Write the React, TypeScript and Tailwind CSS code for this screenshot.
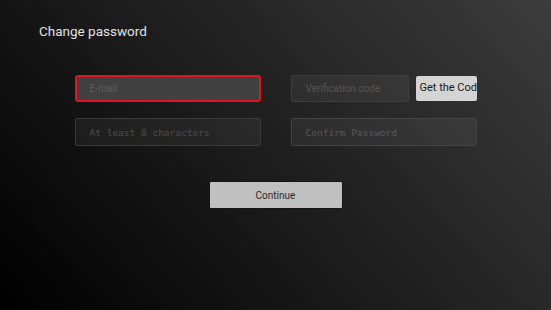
export default function App() {
  return (
    <div
      className="w-[551px] h-[310px] overflow-hidden bg-[linear-gradient(48deg,#000_0%,#1e1e1e_50%,#3c3c3c_100%)] flex flex-col"
      style={{ fontFamily: "Roboto, 'Liberation Sans', sans-serif" }}
    >
      <div className="pl-[39px] pt-[22px] text-[13.5px] leading-[18px] text-[#e2e2e2]">Change password</div>

      <div className="mt-[35px] mx-auto grid grid-cols-[186px_186px] gap-x-[30px] gap-y-[16px]">
        <input
          placeholder="E-mail"
          className="h-[27px] w-[186px] rounded-[3px] border-2 border-[#e0141a] bg-[#414141] px-[13px] text-[10px] text-[#ddd] placeholder:text-[#5c5c5c] outline-none"
        />
        <div className="flex items-center gap-[7px]">
          <input
            placeholder="Verification code"
            className="h-[27px] w-[118px] rounded-[2px] border border-[#3e3e3e] bg-white/5 px-[14px] text-[10px] text-[#ddd] placeholder:text-[#555] outline-none"
          />
          <button
            type="button"
            className="h-[25px] w-[61px] shrink-0 overflow-hidden whitespace-nowrap rounded-[2px] bg-[#d4d4d4] pl-[4px] text-left text-[11px] text-[#1a1a1a]"
          >
            Get the Code
          </button>
        </div>
        <input
          type="text"
          placeholder="At least 8 characters"
          className="h-[28px] w-[186px] rounded-[2px] border border-[#3a3a3a] bg-white/5 px-[14px] text-[9.5px] text-[#ddd] placeholder:text-[#4c4c4c] outline-none"
          style={{ fontFamily: "'DejaVu Sans Mono', monospace" }}
        />
        <input
          type="text"
          placeholder="Confirm Password"
          className="h-[28px] w-[186px] rounded-[2px] border border-[#444] bg-white/5 px-[14px] text-[9.5px] text-[#ddd] placeholder:text-[#585858] outline-none"
          style={{ fontFamily: "'DejaVu Sans Mono', monospace" }}
        />
      </div>

      <div className="mt-[35px] flex justify-center">
        <button
          type="button"
          className="h-[28px] w-[134px] rounded-[2px] border border-[#151515] bg-[#c0c0c0] text-[10px] text-[#2a2a2a]"
        >
          Continue
        </button>
      </div>
    </div>
  );
}
